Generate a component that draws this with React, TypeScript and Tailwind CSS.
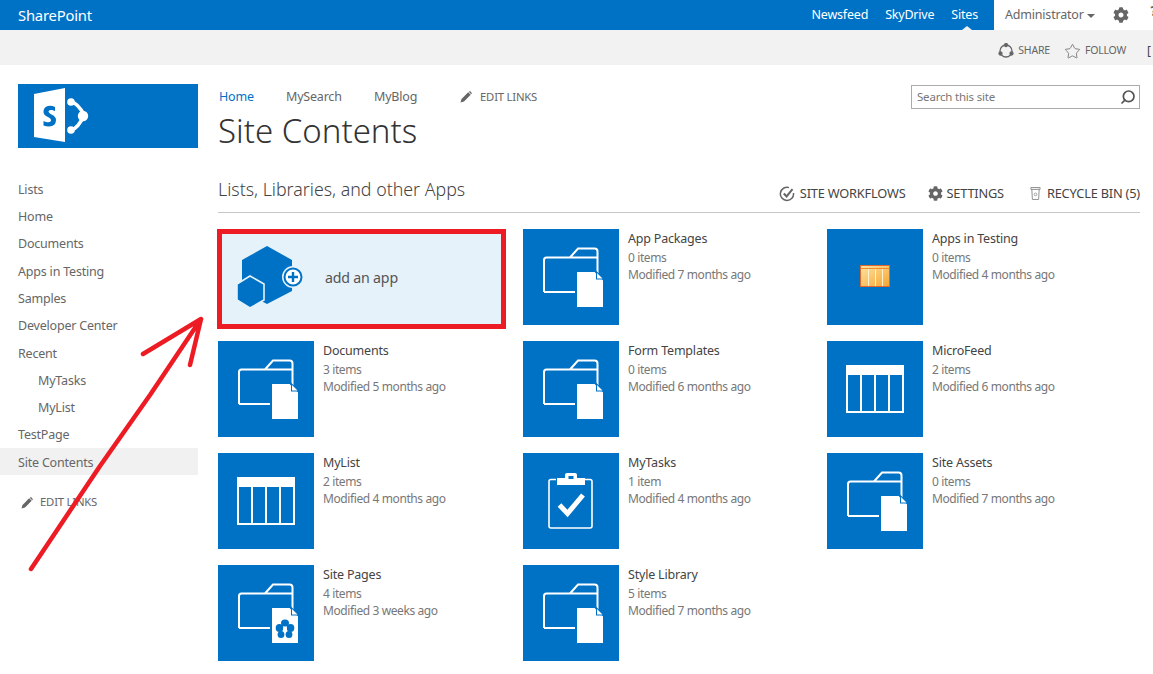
import { FaCog } from "react-icons/fa";
import { Search, Star } from "lucide-react";

const BLUE = "#0072c6";

function Pencil({ className = "" }: { className?: string }) {
  return (
    <svg viewBox="0 0 12 12" className={className} fill="#666">
      <path d="M0.5 11.5 L1.5 8 L8.2 1.3 L10.7 3.8 L4 10.5 Z" />
      <path d="M9 0.6 Q9.8 -0.1 10.6 0.6 L11.4 1.4 Q12.1 2.2 11.4 3 L11.2 3.2 L8.8 0.8 Z" />
    </svg>
  );
}

function FolderIcon({ flower = false }: { flower?: boolean }) {
  return (
    <svg viewBox="0 0 96 96" className="w-24 h-24 block">
      <path
        d="M21 63 V31 Q21 28.5 23.5 28.5 H74.5 M47 28.5 L55 19.5 H71.5 Q74.5 19.5 74.5 22.5 V50 M21 63 H56"
        fill="none"
        stroke="#fff"
        strokeWidth="2"
      />
      <path d="M53 42 H72 L81 51 V79 H53 Z" fill="#fff" stroke={BLUE} strokeWidth="2" />
      <path d="M73 43.5 L80 50.5 H73 Z" fill={BLUE} />
      <path d="M74 44 L79.5 49.5 H74 Z" fill="#fff" />
      {flower && (
        <g fill={BLUE}>
          <ellipse cx="67" cy="58" rx="4" ry="3.6" />
          <ellipse cx="61.5" cy="63" rx="3.8" ry="4" />
          <ellipse cx="72.5" cy="63" rx="3.8" ry="4" />
          <ellipse cx="63" cy="69.5" rx="3.4" ry="3.6" />
          <ellipse cx="71" cy="69.5" rx="3.4" ry="3.6" />
          <circle cx="67" cy="64" r="2" fill="#fff" />
        </g>
      )}
    </svg>
  );
}

function TableIcon() {
  return (
    <svg viewBox="0 0 96 96" className="w-24 h-24 block">
      <rect x="19" y="24" width="58" height="48" fill="#fff" />
      <rect x="21" y="34" width="12" height="36" fill={BLUE} />
      <rect x="35" y="34" width="12" height="36" fill={BLUE} />
      <rect x="49" y="34" width="12" height="36" fill={BLUE} />
      <rect x="63" y="34" width="12" height="36" fill={BLUE} />
    </svg>
  );
}

function OrangeTableIcon() {
  return (
    <svg viewBox="0 0 96 96" className="w-24 h-24 block">
      <defs>
        <linearGradient id="orangeFill" x1="0" y1="0" x2="1" y2="1">
          <stop offset="0" stopColor="#fde4a4" />
          <stop offset="1" stopColor="#f7a52f" />
        </linearGradient>
      </defs>
      <rect x="33.5" y="36.5" width="29" height="21" fill="url(#orangeFill)" stroke="#e0682a" />
      <path d="M34 39.5 H62" stroke="#f08a2c" strokeWidth="1" />
      <path d="M41.5 40 V57 M48.5 40 V57 M55.5 40 V57" stroke="#fff2d0" strokeWidth="1" />
    </svg>
  );
}

function ClipboardIcon() {
  return (
    <svg viewBox="0 0 96 96" className="w-24 h-24 block">
      <path
        d="M33 26.5 H28 Q26 26.5 26 28.5 V73 Q26 75 28 75 H67 Q69 75 69 73 V28.5 Q69 26.5 67 26.5 H62"
        fill="none"
        stroke="#fff"
        strokeWidth="1.6"
      />
      <path
        d="M34 25 H42 V22 Q42 20 44 20 H52 Q54 20 54 22 V25 H62 V32 H34 Z M45.5 23 V26 H50.5 V23 Z"
        fill="#fff"
        fillRule="evenodd"
      />
      <path d="M36.5 52 L44.5 60.5 L60 42" fill="none" stroke="#fff" strokeWidth="5" />
    </svg>
  );
}

function AddAppIcon() {
  return (
    <svg viewBox="0 0 72 68" className="w-[72px] h-[68px] block">
      <path d="M31 1 L56 15 V46 L31 59 L6 46 V15 Z" fill={BLUE} />
      <path d="M14 31 L28 39 V55 L14 63 L1 55 V39 Z" fill={BLUE} stroke="#e5f2fa" strokeWidth="1.6" />
      <circle cx="57" cy="32" r="11" fill="#e5f2fa" />
      <circle cx="57" cy="32" r="8.5" fill="#fff" stroke={BLUE} strokeWidth="2" />
      <path d="M57 27 V37 M52 32 H62" stroke={BLUE} strokeWidth="2.4" />
    </svg>
  );
}

function SharePointLogo() {
  return (
    <svg viewBox="0 0 80 56" className="w-20 h-14 block">
      <path d="M0 6 L31 0 V54 L0 49 Z" fill="#fff" />
      <path
        d="M21 19 Q17 17 14 18 Q9.5 19 9.5 24 Q9.5 27 14 29 Q17 30.5 17 32 Q17 35 12 34 Q10.5 33.5 9.5 33 V37.5 Q12 38.5 15 38.5 Q22 38 22 32 Q22 28.5 17.5 26.5 Q14.5 25 14.5 23.5 Q14.5 21.5 18 22 Q19.5 22.5 21 23 Z"
        fill={BLUE}
      />
      <path d="M37 14 Q44 15 50 27 Q44 41 37 42" fill="none" stroke="#fff" strokeWidth="3.6" />
      <circle cx="37" cy="14" r="3.8" fill="#fff" />
      <circle cx="37" cy="42" r="3.8" fill="#fff" />
      <circle cx="49" cy="28" r="5.2" fill="#fff" />
    </svg>
  );
}

function ShareIcon() {
  return (
    <svg viewBox="0 0 16 16" className="w-4 h-4" fill="none" stroke="#666" strokeWidth="1.3">
      <circle cx="8" cy="8" r="6" />
      <circle cx="8" cy="2" r="1.5" fill="#666" />
      <circle cx="2.5" cy="10.5" r="1.5" fill="#666" />
      <circle cx="13.5" cy="10.5" r="1.5" fill="#666" />
    </svg>
  );
}

function WorkflowIcon() {
  return (
    <svg viewBox="0 0 16 16" className="w-4 h-4" fill="none" stroke="#666">
      <path d="M10 1.6 A6.6 6.6 0 1 0 14.5 7" strokeWidth="1.5" />
      <path d="M4.8 7.5 L7.6 10.5 L13.5 3.2" strokeWidth="2" />
    </svg>
  );
}

function BinIcon() {
  return (
    <svg viewBox="0 0 12 16" className="w-[11px] h-[15px]" fill="none" stroke="#888">
      <path d="M1 1.5 H11 V3.5 H1 Z M2 3.5 L2.6 14.5 H9.4 L10 3.5" />
      <circle cx="6" cy="9" r="1.5" strokeWidth="0.8" />
    </svg>
  );
}

const navItems = [
  { label: "Lists" },
  { label: "Home" },
  { label: "Documents" },
  { label: "Apps in Testing" },
  { label: "Samples" },
  { label: "Developer Center" },
  { label: "Recent" },
  { label: "MyTasks", sub: true },
  { label: "MyList", sub: true },
  { label: "TestPage" },
  { label: "Site Contents", active: true },
];

const tiles = [
  { name: "App Packages", count: "0 items", modified: "Modified 7 months ago", icon: <FolderIcon /> },
  { name: "Apps in Testing", count: "0 items", modified: "Modified 4 months ago", icon: <OrangeTableIcon /> },
  { name: "Documents", count: "3 items", modified: "Modified 5 months ago", icon: <FolderIcon /> },
  { name: "Form Templates", count: "0 items", modified: "Modified 6 months ago", icon: <FolderIcon /> },
  { name: "MicroFeed", count: "2 items", modified: "Modified 6 months ago", icon: <TableIcon /> },
  { name: "MyList", count: "2 items", modified: "Modified 4 months ago", icon: <TableIcon /> },
  { name: "MyTasks", count: "1 item", modified: "Modified 4 months ago", icon: <ClipboardIcon /> },
  { name: "Site Assets", count: "0 items", modified: "Modified 7 months ago", icon: <FolderIcon /> },
  { name: "Site Pages", count: "4 items", modified: "Modified 3 weeks ago", icon: <FolderIcon flower /> },
  { name: "Style Library", count: "5 items", modified: "Modified 7 months ago", icon: <FolderIcon /> },
];

function Tile({ name, count, modified, icon }: (typeof tiles)[number]) {
  return (
    <div className="flex">
      <div className="w-24 h-24 shrink-0 bg-[#0072c6]">{icon}</div>
      <div className="pl-[9px] pt-[1px]">
        <div className="text-[12.5px] leading-[18px] text-[#444]">{name}</div>
        <div className="text-[12px] leading-[18px] mt-px text-[#777] tracking-[-0.4px]">{count}</div>
        <div className="text-[12px] leading-[17px] -mt-px text-[#777] tracking-[-0.4px]">{modified}</div>
      </div>
    </div>
  );
}

export default function App() {
  return (
    <div className="relative w-[1153px] h-[674px] overflow-hidden bg-white font-['Noto_Sans',sans-serif] tracking-[-0.2px]">
      <header className="flex items-center h-[30px] bg-[#0072c6] text-white">
        <div className="pl-[18px] text-[14.8px]">SharePoint</div>
        <nav className="ml-auto flex h-full items-center text-[12.5px]">
          <span className="mr-[17px]">Newsfeed</span>
          <span className="mr-[17px]">SkyDrive</span>
          <span className="relative mr-[16px]">
            Sites
            <span className="absolute left-[11px] top-[20px] w-0 h-0 border-x-[5px] border-x-transparent border-b-[4px] border-b-[#f2f2f2]" />
          </span>
        </nav>
        <div className="flex h-full w-[159px] shrink-0 items-center overflow-hidden bg-white text-[#666] pl-[11px]">
          <span className="text-[12.5px] shrink-0">Administrator</span>
          <span className="ml-[3px] mt-[2px] shrink-0 w-0 h-0 border-x-[4px] border-x-transparent border-t-[4px] border-t-[#666]" />
          <FaCog className="ml-[18px] shrink-0 text-[16px] text-[#666]" />
          <span className="ml-[22px] -mt-[10px] shrink-0 text-[14px] font-bold text-[#666]">?</span>
        </div>
      </header>

      <div className="flex items-center justify-end h-[35px] pt-[7px] bg-[#f2f2f2] text-[#666] text-[10.5px]">
        <ShareIcon />
        <span className="ml-[4px]">SHARE</span>
        <Star className="ml-[14px] w-[17px] h-[17px]" strokeWidth={1.1} />
        <span className="ml-[4px]">FOLLOW</span>
        <span className="ml-[21px] w-[6px] overflow-hidden text-[#444] text-[12px]">[</span>
      </div>

      <div className="flex">
        <aside className="w-[198px] shrink-0 pt-[19px]">
          <div className="ml-[18px] h-16 bg-[#0072c6] flex items-center pl-[16px]">
            <SharePointLogo />
          </div>
          <ul className="mt-[27px] text-[12.5px] text-[#666]">
            {navItems.map((item) => (
              <li
                key={item.label}
                className={`h-[27.3px] pt-[3px] flex items-center ${item.sub ? "pl-[38px]" : "pl-[18px]"} ${item.active ? "bg-[#f1f1f1]" : ""}`}
              >
                {item.label}
              </li>
            ))}
          </ul>
          <div className="flex items-center mt-[19px] pl-[21px] text-[#666] text-[11.3px]">
            <Pencil className="w-3 h-3" />
            <span className="ml-[7px]">EDIT LINKS</span>
          </div>
        </aside>

        <main className="w-[922px] ml-[20px]">
          <div className="flex justify-between pt-[19px]">
            <div>
              <div className="flex items-center h-[24px] pt-[2px] text-[12.5px] text-[#666] pl-px">
                <span className="w-[67px] text-[#0072c6]">Home</span>
                <span className="w-[88px]">MySearch</span>
                <span className="w-[86px]">MyBlog</span>
                <Pencil className="w-3 h-3" />
                <span className="ml-[8px] text-[11.3px]">EDIT LINKS</span>
              </div>
              <h1 className="h-[46px] font-['Open_Sans',sans-serif] text-[33px] leading-[46px] font-light text-[#333] tracking-normal">
                Site Contents
              </h1>
            </div>
            <div className="flex items-center justify-between w-[229px] h-[24px] mt-px pl-[5px] pr-[3px] border border-[#ababab] text-[11.5px] text-[#777]">
              <span>Search this site</span>
              <Search className="w-4 h-4 -scale-x-100 text-[#555]" strokeWidth={2.6} />
            </div>
          </div>

          <div className="flex items-center justify-between h-[36px] mt-[23px] border-b border-[#c6c6c6] text-[#444]">
            <h2 className="font-['Open_Sans',sans-serif] text-[17.8px] font-light tracking-normal -mt-[10px]">
              Lists, Libraries, and other Apps
            </h2>
            <div className="flex items-center text-[12.8px] -mt-[2px]">
              <WorkflowIcon />
              <span className="ml-[5px]">SITE WORKFLOWS</span>
              <FaCog className="ml-[23px] text-[15px] text-[#666]" />
              <span className="ml-[3px]">SETTINGS</span>
              <span className="ml-[26px]">
                <BinIcon />
              </span>
              <span className="ml-[6px]">RECYCLE BIN (5)</span>
            </div>
          </div>

          <div className="grid grid-cols-[305px_304px_1fr] auto-rows-[96px] gap-y-4 mt-4">
            <div className="flex items-center w-[289px] h-[100px] -ml-px border-[5px] border-[#ed1c24] bg-[#e5f2fa] z-10">
              <div className="ml-[14px]">
                <AddAppIcon />
              </div>
              <span className="ml-[17px] -mt-[2px] text-[14.2px] text-[#555]">add an app</span>
            </div>
            {tiles.map((t) => (
              <Tile key={t.name} {...t} />
            ))}
          </div>
        </main>
      </div>

      {/* red arrow drawn over the page */}
      <svg className="absolute left-0 top-0 w-[1153px] h-[674px] pointer-events-none" viewBox="0 0 1153 674" fill="none">
        <path
          d="M31 569 L100 466 L150 395 L201 319 M143 354 L201 319 M190 365 L201 319"
          stroke="#ed1c24"
          strokeWidth="4.5"
          strokeLinecap="round"
          strokeLinejoin="round"
        />
      </svg>
    </div>
  );
}
